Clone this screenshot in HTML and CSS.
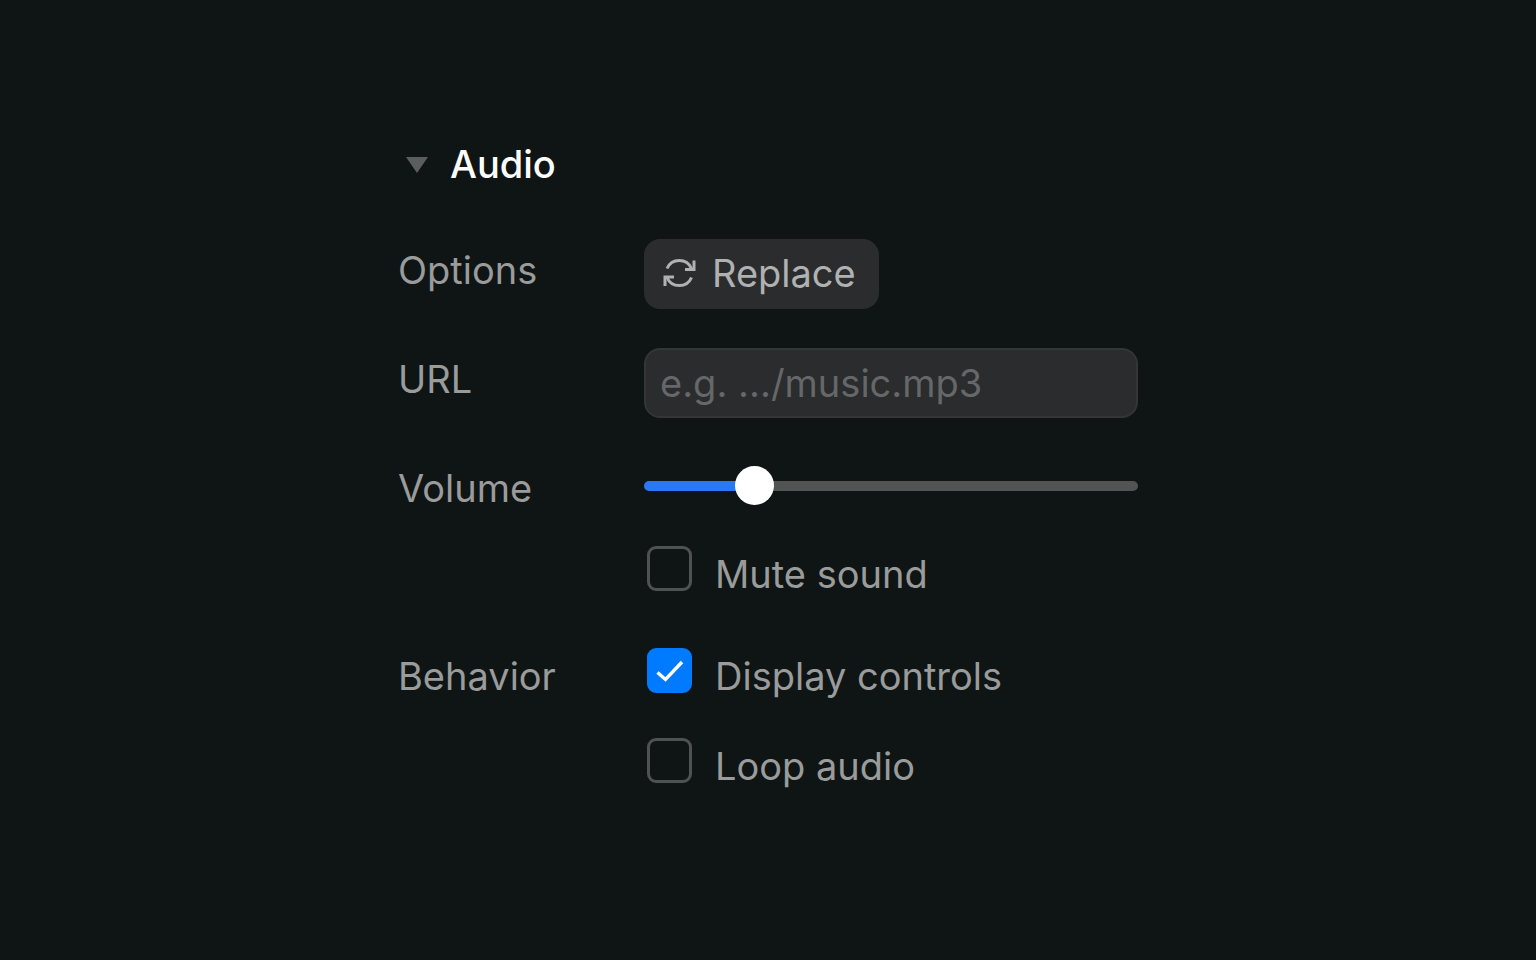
FILE: index.html
```html
<!DOCTYPE html>
<html lang="en">
<head>
  <meta charset="utf-8">
  <meta name="viewport" content="width=device-width, initial-scale=1">
  <title>Audio</title>
  <link rel="stylesheet" href="styles.css">
</head>
<body>
  <main class="panel">
    <h1 class="heading">
      <button class="toggle" type="button" aria-expanded="true">
        <svg class="toggle-arrow" viewBox="0 0 22 18" aria-hidden="true"><path d="M0 2H22L11 18Z" fill="currentColor"/></svg>
        Audio
      </button>
    </h1>
    <form class="fields">
      <div class="row">
        <span class="label">Options</span>
        <div class="control">
          <button class="replace" type="button">
            <svg class="replace-icon" viewBox="0 0 34 34" fill="none" stroke="currentColor" stroke-width="3" aria-hidden="true">
              <path d="M5 12.500A13.300 13.300 0 0 1 29.500 12.500"/>
              <path d="M32 4.500V13.500H23"/>
              <path d="M29.500 21.500A13.300 13.300 0 0 1 5 21.500"/>
              <path d="M3 30V21H12"/>
            </svg>
            Replace
          </button>
        </div>
      </div>
      <div class="row">
        <label class="label" for="url">URL</label>
        <div class="control">
          <input class="text-input" id="url" type="text" placeholder="e.g. .../music.mp3">
        </div>
      </div>
      <div class="row">
        <label class="label" for="volume">Volume</label>
        <div class="control">
          <input class="slider" id="volume" type="range" min="0" max="100" value="20">
          <label class="option"><input class="checkbox" type="checkbox">Mute sound</label>
        </div>
      </div>
      <div class="row row-behavior" role="group" aria-labelledby="behavior">
        <span class="label" id="behavior">Behavior</span>
        <div class="control">
          <label class="option"><input class="checkbox" type="checkbox" checked>Display controls</label>
          <label class="option"><input class="checkbox" type="checkbox">Loop audio</label>
        </div>
      </div>
    </form>
  </main>
</body>
</html>
```

FILE: styles.css
```css
* {
  box-sizing: border-box;
}

body {
  margin: 0;
  min-height: 100vh;
  padding: 140px 24px 48px;
  background: #0f1414;
  color: #9a9b9b;
  font: 400 38px/48px Inter, "Liberation Sans", sans-serif;
  font-optical-sizing: none;
}

button,
input {
  margin: 0;
  font: inherit;
  font-optical-sizing: none;
}

.panel {
  max-width: 740px;
  margin: 0 auto;
}

.heading {
  margin: 0 0 51px;
  font: inherit;
}

.toggle {
  display: flex;
  align-items: center;
  gap: 22px;
  padding: 0 0 0 8px;
  border: 0;
  background: none;
  color: #fff;
  font-weight: 500;
}

.toggle-arrow {
  width: 22px;
  height: 18px;
  color: #5c5e5e;
}

.fields {
  display: flex;
  flex-direction: column;
  gap: 39px;
}

.row {
  display: grid;
  grid-template-columns: 246px 1fr;
  align-items: start;
}

.label {
  line-height: 62px;
}

.row-behavior {
  margin-top: 7px;
}

.row-behavior .label {
  line-height: 56px;
}

.control {
  display: flex;
  flex-direction: column;
  align-items: flex-start;
  gap: 34px;
}

.replace {
  display: flex;
  align-items: center;
  gap: 16px;
  height: 70px;
  padding: 0 23px 2px 18px;
  border: 0;
  border-radius: 16px;
  background: #2a2c2d;
  color: #b0b1b1;
}

.replace-icon {
  width: 34px;
  height: 34px;
}

.text-input {
  width: 100%;
  height: 70px;
  padding: 0 14px;
  border: 2px solid #333637;
  border-radius: 16px;
  background: #2a2c2d;
  color: #b0b1b1;
}

.text-input::placeholder {
  color: #656768;
  opacity: 1;
}

.slider {
  appearance: none;
  width: 100%;
  height: 57px;
  margin-bottom: -2px;
  background: none;
}

.slider::-webkit-slider-runnable-track {
  height: 10px;
  border-radius: 5px;
  background: linear-gradient(to right, #2b77f8 22%, #525353 22%);
}

.slider::-webkit-slider-thumb {
  appearance: none;
  width: 39px;
  height: 39px;
  margin-top: -15px;
  border-radius: 50%;
  background: #fff;
}

.option {
  display: flex;
  align-items: flex-start;
  gap: 23px;
  padding-left: 3px;
  line-height: 56px;
}

.checkbox {
  appearance: none;
  flex: none;
  width: 45px;
  height: 45px;
  border: 3px solid #505252;
  border-radius: 9px;
}

.checkbox:checked {
  border-color: #007aff;
  background: #007aff url("data:image/svg+xml,%3Csvg xmlns='http://www.w3.org/2000/svg' viewBox='0 0 39 39'%3E%3Cpath d='M7.500 21.500L15.500 28.500L32 11' fill='none' stroke='white' stroke-width='3.400'/%3E%3C/svg%3E") center / 100% no-repeat;
}
```
